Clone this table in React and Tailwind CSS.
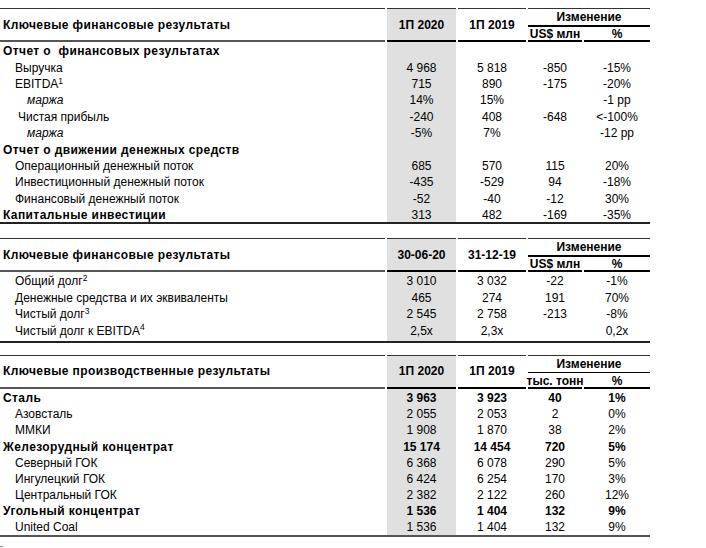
import React from "react";

const FONT = "font-['Liberation_Sans',Arial,sans-serif]";

function Header({ title, c1, c2, unit }) {
  return (
    <div className="flex gap-x-[2px] h-[34px] w-[650px]">
      <div className="w-[385px] border-t border-t-[#333] border-b-2 border-b-[#555] flex items-center pl-[3px] font-bold tracking-[0.4px] whitespace-nowrap">
        {title}
      </div>
      <div className="w-[69px] bg-[#e0e0e0] border-t border-t-[#333] border-b-2 border-b-black flex items-center justify-center font-bold">
        {c1}
      </div>
      <div className="w-[68px] border-t border-t-[#333] border-b-2 border-b-black flex items-center justify-center font-bold">
        {c2}
      </div>
      <div className="w-[122px] border-t border-t-[#333] flex flex-col">
        <div className="h-[16px] flex items-center justify-center font-bold">Изменение</div>
        <div className="h-[1.5px] bg-black" />
        <div className="flex-1 flex gap-x-[2px]">
          <div className="w-[54px] border-b-2 border-b-black flex items-center justify-center font-bold whitespace-nowrap pt-[1px]">
            {unit}
          </div>
          <div className="w-[66px] border-b-2 border-b-black flex items-center justify-center font-bold pt-[1px]">
            %
          </div>
        </div>
      </div>
    </div>
  );
}

function Row({ label, v = [], kind = "item", boldNums = false, h }) {
  let labelCls = "pl-[15px]";
  if (kind === "section") labelCls = "pl-[3px] font-bold tracking-[0.4px]";
  if (kind === "italic") labelCls = "pl-[27px] italic";
  if (kind === "item2") labelCls = "pl-[18px]";
  const numCls = boldNums ? "font-bold" : "";
  return (
    <div className={`flex gap-x-[2px] w-[650px] ${h}`}>
      <div className={`w-[385px] flex items-center whitespace-pre pt-[2px] ${labelCls}`}>{label}</div>
      <div className={`w-[69px] bg-[#e0e0e0] flex items-center justify-center pt-[2px] ${numCls}`}>{v[0]}</div>
      <div className={`w-[68px] flex items-center justify-center pt-[2px] ${numCls}`}>{v[1]}</div>
      <div className={`w-[54px] flex items-center justify-center pt-[2px] ${numCls}`}>{v[2]}</div>
      <div className={`w-[66px] flex items-center justify-center pt-[2px] ${numCls}`}>{v[3]}</div>
    </div>
  );
}

function Pad({ h }) {
  return (
    <div className={`flex gap-x-[2px] w-[650px] ${h}`}>
      <div className="w-[385px]" />
      <div className="w-[69px] bg-[#e0e0e0]" />
    </div>
  );
}

const Sup = ({ n }) => <sup className="text-[8.5px]">{n}</sup>;

export default function App() {
  const h1 = "h-[16.4px]";
  const h2 = "h-[16.4px]";
  const h3 = "h-[16.2px]";
  return (
    <div className={`${FONT} bg-white text-black text-[12px] leading-none w-[706px] h-[548px] pt-[8px] overflow-hidden`}>
      {/* Table 1 */}
      <Header title="Ключевые финансовые результаты" c1="1П 2020" c2="1П 2019" unit="US$ млн" />
      <Row h={h1} kind="section" label="Отчет о  финансовых результатах" />
      <Row h={h1} label="Выручка" v={["4 968", "5 818", "-850", "-15%"]} />
      <Row h={h1} label={<span>EBITDA<Sup n="1" /></span>} v={["715", "890", "-175", "-20%"]} />
      <Row h={h1} kind="italic" label="маржа" v={["14%", "15%", "", "-1 pp"]} />
      <Row h={h1} kind="item2" label="Чистая прибыль" v={["-240", "408", "-648", "<-100%"]} />
      <Row h={h1} kind="italic" label="маржа" v={["-5%", "7%", "", "-12 pp"]} />
      <Row h={h1} kind="section" label="Отчет о движении денежных средств" />
      <Row h={h1} label="Операционный денежный поток" v={["685", "570", "115", "20%"]} />
      <Row h={h1} label="Инвестиционный денежный поток" v={["-435", "-529", "94", "-18%"]} />
      <Row h={h1} label="Финансовый денежный поток" v={["-52", "-40", "-12", "30%"]} />
      <Row h={h1} kind="section" label="Капитальные инвестиции" v={["313", "482", "-169", "-35%"]} />
      <div className="w-[650px] h-[2px] bg-[#222]" />

      {/* Table 2 */}
      <div className="mt-[14px]" />
      <Header title="Ключевые финансовые результаты" c1="30-06-20" c2="31-12-19" unit="US$ млн" />
      <Row h={h2} label={<span>Общий долг<Sup n="2" /></span>} v={["3 010", "3 032", "-22", "-1%"]} />
      <Row h={h2} label="Денежные средства и их эквиваленты" v={["465", "274", "191", "70%"]} />
      <Row h={h2} label={<span>Чистый долг<Sup n="3" /></span>} v={["2 545", "2 758", "-213", "-8%"]} />
      <Row h={h2} label={<span>Чистый долг к EBITDA<Sup n="4" /></span>} v={["2,5x", "2,3x", "", "0,2x"]} />
      <Pad h="h-[3px]" />
      <div className="w-[650px] h-[2px] bg-[#222]" />

      {/* Table 3 */}
      <div className="mt-[12px]" />
      <Header title="Ключевые производственные результаты" c1="1П 2020" c2="1П 2019" unit="тыс. тонн" />
      <Row h={h3} kind="section" boldNums label="Сталь" v={["3 963", "3 923", "40", "1%"]} />
      <Row h={h3} label="Азовсталь" v={["2 055", "2 053", "2", "0%"]} />
      <Row h={h3} label="ММКИ" v={["1 908", "1 870", "38", "2%"]} />
      <Row h={h3} kind="section" boldNums label="Железорудный концентрат" v={["15 174", "14 454", "720", "5%"]} />
      <Row h={h3} label="Северный ГОК" v={["6 368", "6 078", "290", "5%"]} />
      <Row h={h3} label="Ингулецкий ГОК" v={["6 424", "6 254", "170", "3%"]} />
      <Row h={h3} label="Центральный ГОК" v={["2 382", "2 122", "260", "12%"]} />
      <Row h={h3} kind="section" boldNums label="Угольный концентрат" v={["1 536", "1 404", "132", "9%"]} />
      <Row h={h3} label="United Coal" v={["1 536", "1 404", "132", "9%"]} />
      <div className="w-[650px] h-[2px] bg-[#555]" />
      <div className="mt-[9px] w-[3px] h-[1px] bg-[#888]" />
    </div>
  );
}
